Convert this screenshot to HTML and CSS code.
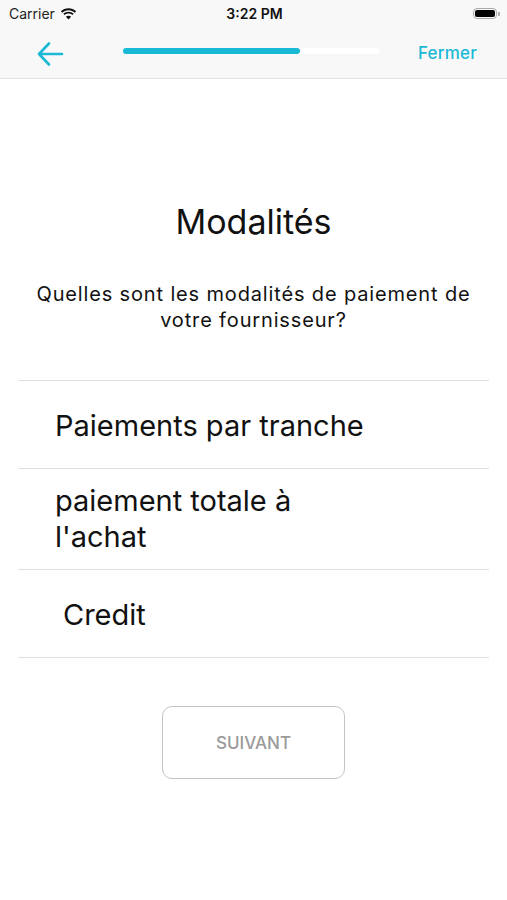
FILE: index.html
```html
<!DOCTYPE html>
<html lang="fr">
<head>
    <meta charset="UTF-8">
    <meta name="viewport" content="width=device-width, initial-scale=1.0">
    <title>Modalités</title>
    <link rel="stylesheet" href="styles.css">
</head>
<body>
    <header class="top">
        <div class="status">
            <div class="carrier">Carrier
                <svg class="wifi" width="17" height="12" viewBox="0 0 17 12">
                    <path d="M8.5 2.2c2.4 0 4.6.9 6.3 2.5l1.3-1.4C14.1 1.4 11.4.3 8.5.3S2.9 1.4.9 3.3l1.3 1.4C3.9 3.1 6.1 2.2 8.5 2.2z" fill="#111"/>
                    <path d="M8.5 5.6c1.5 0 2.8.5 3.9 1.5l1.3-1.4C12.3 4.4 10.5 3.7 8.5 3.7S4.7 4.4 3.3 5.7l1.3 1.4c1.1-1 2.4-1.5 3.9-1.5z" fill="#111"/>
                    <path d="M8.5 11.6l2.6-2.8c-.7-.6-1.6-1-2.6-1s-1.9.4-2.6 1z" fill="#111"/>
                </svg>
            </div>
            <div class="time">3:22 PM</div>
            <div class="battery">
                <span class="battery-body"><span class="battery-fill"></span></span>
                <span class="battery-tip"></span>
            </div>
        </div>
        <nav class="navbar">
            <svg class="back" width="28" height="26" viewBox="0 0 28 26">
                <path d="M26 13H3M13 2.5L3 13l10 10.5" fill="none" stroke="#1cb8d6" stroke-width="2.6" stroke-linecap="round" stroke-linejoin="round"/>
            </svg>
            <div class="progress"><div class="progress-fill" style="width: 69%"></div></div>
            <a class="close" href="#">Fermer</a>
        </nav>
    </header>

    <main class="content">
        <h1 class="title">Modalités</h1>
        <p class="question">Quelles sont les modalités de paiement de votre fournisseur?</p>

        <ul class="options">
            <li class="option">Paiements par tranche</li>
            <li class="option">paiement totale à<br>l'achat</li>
            <li class="option option-indent">Credit</li>
        </ul>

        <button class="next" type="button">SUIVANT</button>
    </main>
</body>
</html>
```

FILE: styles.css
```css
body{
    margin: 0;
    font-family: Inter, "Noto Sans", sans-serif;
    background: #fff;
    color: #111;
}

.top{
    background-color: #f8f8f8;
    border-bottom: 1px solid #e2e2e2;
}

.status{
    height: 27px;
    display: flex;
    align-items: center;
    justify-content: space-between;
    padding: 0 7px 0 9px;
    font-size: 14px;
}
.carrier{
    display: flex;
    align-items: center;
    gap: 5px;
    width: 120px;
    color: #222;
}
.time{
    font-weight: 600;
}
.battery{
    width: 120px;
    display: flex;
    justify-content: flex-end;
    align-items: center;
}
.battery-body{
    width: 24px;
    height: 11px;
    border: 1px solid #aaa;
    border-radius: 4px;
    padding: 1px;
    box-sizing: border-box;
    display: flex;
}
.battery-fill{
    flex: 1;
    background: #000;
    border-radius: 2px;
}
.battery-tip{
    width: 2px;
    height: 4px;
    background: #aaa;
    border-radius: 0 1px 1px 0;
    margin-left: 1px;
}

.navbar{
    height: 51px;
    display: flex;
    align-items: center;
    padding: 0 30px 0 36px;
}
.back{
    margin-top: 2px;
}
.progress{
    margin-left: 59px;
    width: 256px;
    height: 6px;
    border-radius: 3px;
    background: #fff;
    display: flex;
    margin-top: -3px;
}
.progress-fill{
    background: #17b9d4;
    border-radius: 3px;
}
.close{
    margin-left: auto;
    color: #1cb8d6;
    text-decoration: none;
    font-size: 17px;
    font-weight: 500;
    letter-spacing: 0.2px;
}

.content{
    display: flex;
    flex-direction: column;
    align-items: center;
    padding: 0 18px;
}
.title{
    margin: 122px 0 0;
    font-size: 34px;
    font-weight: 400;
    line-height: 42px;
}
.question{
    margin: 38px 0 0;
    font-size: 20px;
    letter-spacing: 0.85px;
    line-height: 26px;
    text-align: center;
    padding: 0;
}

.options{
    list-style: none;
    margin: 47px 0 0;
    padding: 0;
    align-self: stretch;
    border-top: 1px solid #e0e0e0;
}
.option{
    border-bottom: 1px solid #e0e0e0;
    font-size: 29px;
    line-height: 36px;
    padding: 27px 37px 24px;
}
.option:nth-child(2){
    padding: 14px 37px 14px;
}
.option-indent{
    padding-left: 45px;
}

.next{
    margin-top: 48px;
    width: 183px;
    height: 73px;
    background: #fff;
    border: 1.5px solid #c4c4c4;
    border-radius: 10px;
    color: #9a9a9a;
    font-family: inherit;
    font-size: 17px;
    font-weight: 500;
}
```
